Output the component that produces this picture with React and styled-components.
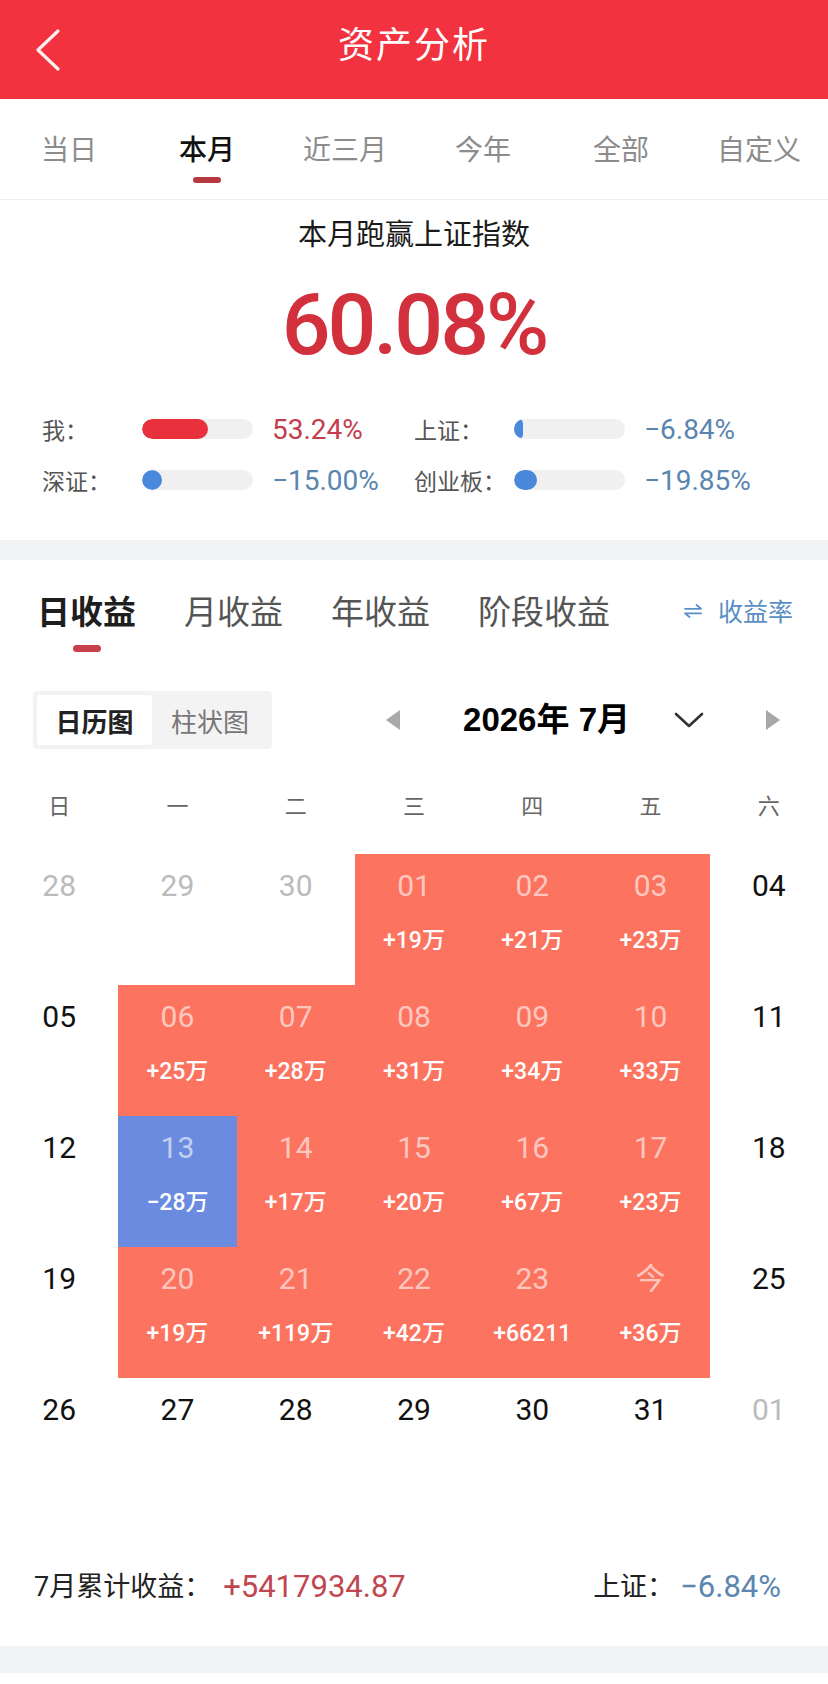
import React from 'react';
import styled, { createGlobalStyle } from 'styled-components';

const GlobalStyle = createGlobalStyle`
  html, body { margin: 0; padding: 0; background: #fff; }
  body {
    font-family: "Noto Sans CJK SC", "Noto Sans", sans-serif;
    -webkit-font-smoothing: antialiased;
  }
  * { box-sizing: border-box; }
`;

const NUM = `Roboto, "Noto Sans CJK SC", sans-serif`;

const Page = styled.div`
  width: 828px;
  min-height: 1684px;
  background: #fff;
`;

/* ---------- header ---------- */
const Header = styled.header`
  height: 99px;
  background: #f2323e;
  display: grid;
  grid-template-columns: 100px 1fr 100px;
  align-items: center;
`;

const BackButton = styled.button`
  background: none;
  border: 0;
  padding: 0 0 0 34px;
  height: 100%;
  display: flex;
  align-items: center;
  cursor: pointer;
`;

const Title = styled.h1`
  margin: 0;
  padding-bottom: 16px;
  text-align: center;
  color: #fff;
  font-size: 36px;
  line-height: 36px;
  font-weight: 400;
  letter-spacing: 2px;
`;

/* ---------- period tabs ---------- */
const PeriodBar = styled.nav`
  display: flex;
  padding: 35px 0 16px;
  border-bottom: 1px solid #eeeeee;
`;

const PeriodTab = styled.div`
  flex: 1;
  display: flex;
  flex-direction: column;
  align-items: center;
  gap: 15px;
  font-size: 28px;
  line-height: 28px;
  color: ${(p) => (p.$active ? '#111' : '#8c8c8c')};
  font-weight: ${(p) => (p.$active ? 500 : 400)};
  &::after {
    content: '';
    width: 28px;
    height: 6px;
    border-radius: 3px;
    background: ${(p) => (p.$active ? '#b5383f' : 'transparent')};
  }
`;

/* ---------- compare ---------- */
const Compare = styled.section`
  padding: 18px 0 43px;
  display: flex;
  flex-direction: column;
  align-items: center;
`;

const CompareTitle = styled.div`
  font-size: 29px;
  line-height: 29px;
  color: #1a1a1a;
`;

const BigNumber = styled.div`
  margin-top: 35px;
  font-family: ${NUM};
  font-size: 86px;
  line-height: 86px;
  font-weight: 500;
  color: #d2303d;
  letter-spacing: -3px;
`;

const StatsGrid = styled.div`
  margin-top: 44px;
  align-self: stretch;
  display: grid;
  grid-template-columns: 372px 1fr;
  row-gap: 17px;
  padding-left: 42px;
`;

const Stat = styled.div`
  display: flex;
  align-items: center;
  height: 34px;
`;

const StatLabel = styled.span`
  width: 100px;
  font-size: 23px;
  color: #555;
`;

const Track = styled.div`
  width: 111px;
  height: 20px;
  border-radius: 10px;
  background: #f0f0f0;
  overflow: hidden;
`;

const Fill = styled.div`
  height: 100%;
  border-radius: 10px;
  background: ${(p) => (p.$up ? '#e8313c' : '#4a88dc')};
`;

const StatValue = styled.span`
  margin-left: 19px;
  font-family: ${NUM};
  font-size: 28px;
  color: ${(p) => (p.$up ? '#c33d4d' : '#5a85af')};
`;

const Band = styled.div`
  height: ${(p) => p.$h}px;
  background: #f2f3f5;
`;

/* ---------- earnings ---------- */
const Earnings = styled.section`
  padding-top: 34px;
`;

const EarnTabs = styled.div`
  display: flex;
  align-items: flex-start;
  padding: 0 35px 0 37px;
`;

const EarnTab = styled.div`
  display: flex;
  flex-direction: column;
  align-items: center;
  gap: 18px;
  margin-right: 48px;
  font-size: 33px;
  line-height: 33px;
  font-weight: ${(p) => (p.$active ? 700 : 400)};
  color: ${(p) => (p.$active ? '#1e1e1e' : '#555')};
  &::after {
    content: '';
    width: 28px;
    height: 7px;
    border-radius: 4px;
    background: ${(p) => (p.$active ? '#c8404b' : 'transparent')};
  }
`;

const RateLink = styled.div`
  margin-left: auto;
  display: flex;
  align-items: center;
  gap: 16px;
  font-size: 25px;
  line-height: 33px;
  color: #5a8ec4;
`;

const Toolbar = styled.div`
  display: flex;
  align-items: center;
  margin-top: 39px;
  padding: 0 48px 0 33px;
`;

const ViewSwitch = styled.div`
  display: flex;
  padding: 4px;
  background: #f3f3f3;
  border-radius: 4px;
`;

const SwitchOption = styled.div`
  width: ${(p) => (p.$active ? 115 : 116)}px;
  height: 50px;
  display: flex;
  align-items: center;
  justify-content: center;
  font-size: 26px;
  border-radius: 3px;
  background: ${(p) => (p.$active ? '#fff' : 'transparent')};
  color: ${(p) => (p.$active ? '#222' : '#777')};
  font-weight: ${(p) => (p.$active ? 600 : 400)};
`;

const MonthNav = styled.div`
  margin-left: auto;
  display: flex;
  align-items: center;
`;

const MonthLabel = styled.div`
  margin: 0 44px 0 63px;
  font-family: "Liberation Sans", "Noto Sans CJK SC", sans-serif;
  font-size: 33px;
  line-height: 40px;
  font-weight: 700;
  color: #000;
`;

const ChevronWrap = styled.span`
  display: flex;
  margin-right: 62px;
`;

const WeekHeader = styled.div`
  display: grid;
  grid-template-columns: repeat(7, 1fr);
  margin-top: 44px;
  font-size: 22px;
  line-height: 22px;
  color: #666;
  text-align: center;
`;

const CalendarGrid = styled.div`
  display: grid;
  grid-template-columns: repeat(7, 1fr);
  grid-auto-rows: 131px;
  margin-top: 39px;
`;

const cellBg = { up: '#fc735f', down: '#6a8be0' };
const numColor = { up: 'rgba(255,255,255,0.62)', down: 'rgba(255,255,255,0.62)', other: '#bbbbbb', plain: '#111' };

const DayCell = styled.div`
  display: flex;
  flex-direction: column;
  align-items: center;
  padding-top: 17px;
  background: ${(p) => cellBg[p.$kind] || 'transparent'};
`;

const DayNum = styled.span`
  font-family: ${NUM};
  font-size: 30px;
  line-height: 30px;
  color: ${(p) => numColor[p.$kind]};
`;

const DayAmount = styled.span`
  margin-top: 28px;
  font-family: ${NUM};
  font-size: 23px;
  line-height: 24px;
  font-weight: 500;
  color: #fff;
`;

const Summary = styled.div`
  display: flex;
  align-items: center;
  justify-content: space-between;
  margin-top: 63px;
  padding: 0 47px 44px 34px;
  line-height: 30px;
`;

const SummaryGroup = styled.div`
  display: flex;
  align-items: center;
`;

const SummaryLabel = styled.span`
  font-family: ${NUM};
  font-size: 27px;
  color: #222;
`;

const SummaryValue = styled.span`
  margin-left: ${(p) => (p.$up ? 12 : 6)}px;
  font-family: ${NUM};
  font-size: 31px;
  color: ${(p) => (p.$up ? '#c0464f' : '#5a86b0')};
`;

/* ---------- icons ---------- */
const BackIcon = () => (
  <svg width="28" height="44" viewBox="0 0 28 44">
    <path d="M24 3 L4 22 L24 41" fill="none" stroke="rgba(255,255,255,0.92)" strokeWidth="3.2" strokeLinecap="round" strokeLinejoin="round" />
  </svg>
);

const SwapIcon = () => (
  <svg width="18" height="14" viewBox="0 0 18 14">
    <path d="M1 4.8 H17 L12.5 1" fill="none" stroke="#5a8ec4" strokeWidth="1.8" strokeLinecap="round" strokeLinejoin="round" />
    <path d="M17 9.4 H1 L5.5 13" fill="none" stroke="#5a8ec4" strokeWidth="1.8" strokeLinecap="round" strokeLinejoin="round" />
  </svg>
);

const Triangle = ({ dir }) => (
  <svg width="14" height="20" viewBox="0 0 14 20">
    <polygon points={dir === 'left' ? '14,0 14,20 0,10' : '0,0 0,20 14,10'} fill="#a8a8a8" />
  </svg>
);

const ChevronDown = () => (
  <svg width="30" height="16" viewBox="0 0 30 16">
    <path d="M2 2 L15 14 L28 2" fill="none" stroke="#333" strokeWidth="2.6" strokeLinecap="round" strokeLinejoin="round" />
  </svg>
);

/* ---------- data ---------- */
const periods = ['当日', '本月', '近三月', '今年', '全部', '自定义'];

const stats = [
  { label: '我：', fill: 66, up: true, value: '53.24%' },
  { label: '上证：', fill: 9, up: false, value: '−6.84%' },
  { label: '深证：', fill: 20, up: false, value: '−15.00%' },
  { label: '创业板：', fill: 23, up: false, value: '−19.85%' },
];

const weekdays = ['日', '一', '二', '三', '四', '五', '六'];

const c = (d, kind = 'plain', amt) => ({ d, kind, amt });
const weeks = [
  [c('28', 'other'), c('29', 'other'), c('30', 'other'), c('01', 'up', '+19万'), c('02', 'up', '+21万'), c('03', 'up', '+23万'), c('04')],
  [c('05'), c('06', 'up', '+25万'), c('07', 'up', '+28万'), c('08', 'up', '+31万'), c('09', 'up', '+34万'), c('10', 'up', '+33万'), c('11')],
  [c('12'), c('13', 'down', '−28万'), c('14', 'up', '+17万'), c('15', 'up', '+20万'), c('16', 'up', '+67万'), c('17', 'up', '+23万'), c('18')],
  [c('19'), c('20', 'up', '+19万'), c('21', 'up', '+119万'), c('22', 'up', '+42万'), c('23', 'up', '+66211'), c('今', 'up', '+36万'), c('25')],
  [c('26'), c('27'), c('28'), c('29'), c('30'), c('31'), c('01', 'other')],
];

export default function App() {
  return (
    <Page>
      <GlobalStyle />
      <Header>
        <BackButton aria-label="返回">
          <BackIcon />
        </BackButton>
        <Title>资产分析</Title>
        <span />
      </Header>

      <PeriodBar>
        {periods.map((p) => (
          <PeriodTab key={p} $active={p === '本月'}>{p}</PeriodTab>
        ))}
      </PeriodBar>

      <Compare>
        <CompareTitle>本月跑赢上证指数</CompareTitle>
        <BigNumber>60.08%</BigNumber>
        <StatsGrid>
          {stats.map((s) => (
            <Stat key={s.label}>
              <StatLabel>{s.label}</StatLabel>
              <Track>
                <Fill $up={s.up} style={{ width: s.fill }} />
              </Track>
              <StatValue $up={s.up}>{s.value}</StatValue>
            </Stat>
          ))}
        </StatsGrid>
      </Compare>

      <Band $h={20} />

      <Earnings>
        <EarnTabs>
          <EarnTab $active>日收益</EarnTab>
          <EarnTab>月收益</EarnTab>
          <EarnTab>年收益</EarnTab>
          <EarnTab>阶段收益</EarnTab>
          <RateLink>
            <SwapIcon />
            收益率
          </RateLink>
        </EarnTabs>

        <Toolbar>
          <ViewSwitch>
            <SwitchOption $active>日历图</SwitchOption>
            <SwitchOption>柱状图</SwitchOption>
          </ViewSwitch>
          <MonthNav>
            <Triangle dir="left" />
            <MonthLabel>2026年 7月</MonthLabel>
            <ChevronWrap>
              <ChevronDown />
            </ChevronWrap>
            <Triangle dir="right" />
          </MonthNav>
        </Toolbar>

        <WeekHeader>
          {weekdays.map((w) => (
            <span key={w}>{w}</span>
          ))}
        </WeekHeader>

        <CalendarGrid>
          {weeks.flat().map((cell, i) => (
            <DayCell key={i} $kind={cell.kind}>
              <DayNum $kind={cell.kind}>{cell.d}</DayNum>
              {cell.amt && <DayAmount>{cell.amt}</DayAmount>}
            </DayCell>
          ))}
        </CalendarGrid>

        <Summary>
          <SummaryGroup>
            <SummaryLabel>7月累计收益：</SummaryLabel>
            <SummaryValue $up>+5417934.87</SummaryValue>
          </SummaryGroup>
          <SummaryGroup>
            <SummaryLabel>上证：</SummaryLabel>
            <SummaryValue>−6.84%</SummaryValue>
          </SummaryGroup>
        </Summary>
      </Earnings>

      <Band $h={27} />
    </Page>
  );
}
